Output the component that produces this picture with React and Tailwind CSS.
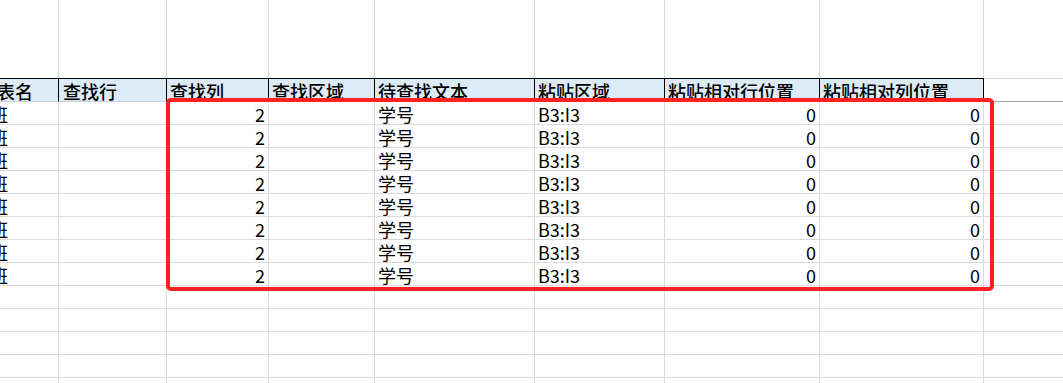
const cols = [
  'w-[59px]',
  'w-[108px]',
  'w-[102px]',
  'w-[106px]',
  'w-[160px]',
  'w-[130px]',
  'w-[155px]',
  'w-[164px]',
]

const headers = ['工作表名', '查找行', '查找列', '查找区域', '待查找文本', '粘贴区域', '粘贴相对行位置', '粘贴相对列位置']

const rowData = [
  { text: '一班', shift: true },
  { text: '' },
  { text: '2', right: true },
  { text: '' },
  { text: '学号' },
  { text: 'B3:I3' },
  { text: '0', right: true },
  { text: '0', right: true },
]

function Cell({ w, children, right, clip, className = '' }) {
  return (
    <div
      className={`${w} shrink-0 h-full flex items-end whitespace-nowrap px-[3px] pb-[1px] leading-none ${clip ? 'overflow-hidden' : ''} ${right ? 'justify-end' : ''} ${className}`}
    >
      {children}
    </div>
  )
}

function EmptyRow({ h = 'h-[23px]', bottom = true }) {
  return (
    <div className={`flex ${h} shrink-0 ${bottom ? 'border-b border-[#dadada]' : ''}`}>
      {cols.map((w, i) => (
        <Cell key={i} w={w} className="border-r border-[#dadada]" />
      ))}
      <div className="flex-1" />
    </div>
  )
}

export default function App() {
  return (
    <div
      className="relative w-[1063px] h-[383px] overflow-hidden bg-white text-black text-[18px] flex flex-col"
      style={{ fontFamily: '"Liberation Sans Narrow", "Arial Narrow", "Noto Sans CJK SC", sans-serif' }}
    >
      <EmptyRow h="h-[78px]" bottom={false} />

      {/* header row */}
      <div className="flex h-[24px] shrink-0">
        {cols.map((w, i) => (
          <Cell
            key={i}
            w={w}
            clip={i === 0}
            className="bg-[#ddebf7] border-t border-r border-b border-t-black border-r-black border-b-[#c9d3dc] font-medium"
          >
            <span className={i === 0 ? 'ml-[-42px]' : i === 1 ? 'ml-[1px]' : ''}>{headers[i]}</span>
          </Cell>
        ))}
        <div className="flex-1 border-t border-b border-t-[#dadada] border-b-[#9e9e9e]" />
      </div>

      {/* data rows */}
      {Array.from({ length: 8 }).map((_, r) => (
        <div key={r} className="flex h-[23px] shrink-0 border-b border-[#dadada]">
          {rowData.map((c, i) => (
            <Cell key={i} w={cols[i]} right={c.right} clip={i === 0} className="border-r border-[#dadada]">
              <span className={c.shift ? 'ml-[-31px]' : ''}>{c.text}</span>
            </Cell>
          ))}
          <div className="flex-1" />
        </div>
      ))}

      {Array.from({ length: 5 }).map((_, r) => (
        <EmptyRow key={r} />
      ))}

      {/* red highlight box */}
      <div className="absolute left-[166px] top-[98px] w-[828px] h-[193px] border-[4px] border-[#ff2222] rounded-[5px] pointer-events-none" />
    </div>
  )
}
